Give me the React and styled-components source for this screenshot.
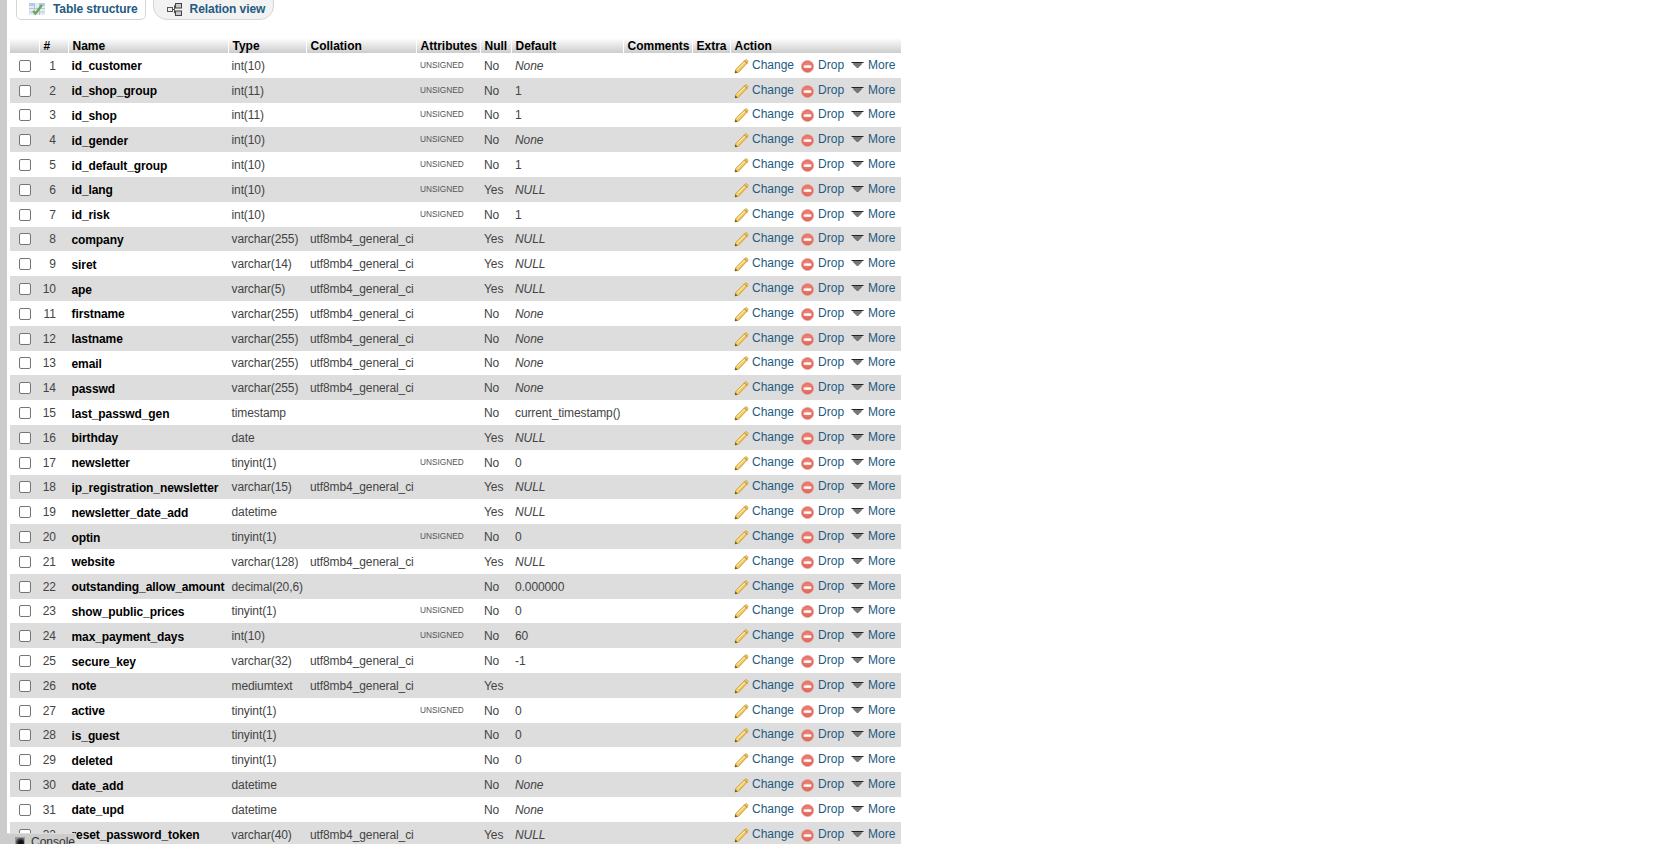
import React from 'react'
import styled, { createGlobalStyle } from 'styled-components'

const GlobalStyle = createGlobalStyle`
  html, body {
    margin: 0;
    padding: 0;
    height: 100%;
    overflow: hidden;
    background: #fff;
  }
  body {
    font-family: "Liberation Sans", Arial, sans-serif;
    font-size: 12px;
    color: #444;
  }
`

const COLLATION = 'utf8mb4_general_ci'

// name, type, collation, unsigned, null, default
const columns = [
  ['id_customer', 'int(10)', '', true, 'No', 'None'],
  ['id_shop_group', 'int(11)', '', true, 'No', '1'],
  ['id_shop', 'int(11)', '', true, 'No', '1'],
  ['id_gender', 'int(10)', '', true, 'No', 'None'],
  ['id_default_group', 'int(10)', '', true, 'No', '1'],
  ['id_lang', 'int(10)', '', true, 'Yes', 'NULL'],
  ['id_risk', 'int(10)', '', true, 'No', '1'],
  ['company', 'varchar(255)', COLLATION, false, 'Yes', 'NULL'],
  ['siret', 'varchar(14)', COLLATION, false, 'Yes', 'NULL'],
  ['ape', 'varchar(5)', COLLATION, false, 'Yes', 'NULL'],
  ['firstname', 'varchar(255)', COLLATION, false, 'No', 'None'],
  ['lastname', 'varchar(255)', COLLATION, false, 'No', 'None'],
  ['email', 'varchar(255)', COLLATION, false, 'No', 'None'],
  ['passwd', 'varchar(255)', COLLATION, false, 'No', 'None'],
  ['last_passwd_gen', 'timestamp', '', false, 'No', 'current_timestamp()'],
  ['birthday', 'date', '', false, 'Yes', 'NULL'],
  ['newsletter', 'tinyint(1)', '', true, 'No', '0'],
  ['ip_registration_newsletter', 'varchar(15)', COLLATION, false, 'Yes', 'NULL'],
  ['newsletter_date_add', 'datetime', '', false, 'Yes', 'NULL'],
  ['optin', 'tinyint(1)', '', true, 'No', '0'],
  ['website', 'varchar(128)', COLLATION, false, 'Yes', 'NULL'],
  ['outstanding_allow_amount', 'decimal(20,6)', '', false, 'No', '0.000000'],
  ['show_public_prices', 'tinyint(1)', '', true, 'No', '0'],
  ['max_payment_days', 'int(10)', '', true, 'No', '60'],
  ['secure_key', 'varchar(32)', COLLATION, false, 'No', '-1'],
  ['note', 'mediumtext', COLLATION, false, 'Yes', ''],
  ['active', 'tinyint(1)', '', true, 'No', '0'],
  ['is_guest', 'tinyint(1)', '', false, 'No', '0'],
  ['deleted', 'tinyint(1)', '', false, 'No', '0'],
  ['date_add', 'datetime', '', false, 'No', 'None'],
  ['date_upd', 'datetime', '', false, 'No', 'None'],
  ['reset_password_token', 'varchar(40)', COLLATION, false, 'Yes', 'NULL'],
]

const headers = [
  ['', 29],
  ['#', 29],
  ['Name', 160],
  ['Type', 78],
  ['Collation', 110],
  ['Attributes', 64],
  ['Null', 31],
  ['Default', 112],
  ['Comments', 69],
  ['Extra', 38],
  ['Action', 171],
]

const Page = styled.div`
  display: flex;
  height: 844px;
  overflow: hidden;
  position: relative;
`

const SideStrip = styled.div`
  flex: 0 0 7px;
  background: #ccc;
`

const Content = styled.div`
  flex: 1;
  padding-left: 3px;
`

const TabBar = styled.ul`
  display: flex;
  align-items: flex-end;
  gap: 7px;
  height: 20px;
  margin: 0 0 18px;
  padding: 0 0 0 6px;
  list-style: none;
  overflow: hidden;
`

const Tab = styled.li`
  display: flex;
  align-items: center;
  gap: 8px;
  height: 29px;
  padding: ${p => (p.$round ? '7px 8px 0 13px' : '7px 7px 0 12px')};
  box-sizing: border-box;
  border: 1px solid #d5d5d5;
  border-radius: ${p => (p.$round ? '0 0 14px 14px' : '0 0 5px 5px')};
  background: ${p => (p.$round ? '#f2f2f2' : '#fff')};
  color: #235a81;
  font-weight: bold;
  font-size: 12px;
  letter-spacing: -0.08px;
`

const Table = styled.table`
  width: 891px;
  table-layout: fixed;
  border-collapse: collapse;
`

const HeadCell = styled.th`
  height: 15px;
  padding: 1px 0 0 ${p => (p.$first ? '0' : '4px')};
  border-left: ${p => (p.$first ? '0' : '1px solid #fff')};
  background: linear-gradient(#fff, #ccc);
  color: #000;
  font-size: 12px;
  font-weight: bold;
  line-height: 14px;
  text-align: left;
  white-space: nowrap;
  overflow: hidden;
  box-sizing: border-box;
  vertical-align: bottom;
`

const Row = styled.tr`
  height: 24.8px;
  background: ${p => (p.$even ? '#ddd' : '#fff')};
`

const Cell = styled.td`
  padding: 1px 0 0 4px;
  font-size: 12px;
  line-height: 14px;
  letter-spacing: -0.1px;
  white-space: nowrap;
  overflow: hidden;
  vertical-align: middle;
  color: #444;
`

const CheckCell = styled.td`
  padding: 1px 0 0 9px;
  vertical-align: middle;
`

const CheckBox = styled.span`
  display: block;
  width: 10px;
  height: 10px;
  border: 1px solid #767676;
  border-radius: 2px;
  background: #fff;
`

const NumberCell = styled(Cell)`
  padding: 1px 12px 0 0;
  text-align: right;
  letter-spacing: 0;
`

const NameCell = styled(Cell)`
  padding: 2px 0 0 3.5px;
  color: #000;
  font-weight: bold;
`

const TypeCell = styled(Cell)`
  padding-left: 3.5px;
`

const Unsigned = styled.span`
  display: block;
  font-size: 8.3px;
  line-height: 10px;
  margin-top: -2px;
  letter-spacing: 0;
  color: #555;
`

const Italic = styled.em`
  font-style: italic;
`

const Actions = styled.div`
  display: flex;
  align-items: center;
  height: 14px;
  margin-top: -2px;
  letter-spacing: 0;
`

const ActionLink = styled.a`
  display: flex;
  align-items: center;
  gap: ${p => p.$gap || 3}px;
  margin-left: ${p => p.$offset || 0}px;
  color: #235a81;
  font-size: 12px;
  text-decoration: none;
`

const ConsoleTab = styled.div`
  position: absolute;
  left: 7px;
  bottom: 0;
  display: flex;
  align-items: flex-start;
  gap: 6px;
  width: 68px;
  height: 11px;
  padding-left: 8px;
  box-sizing: border-box;
  background: #ccc;
  border-top: 1px solid #ddd;
  color: #333;
  font-size: 12px;
  line-height: 14px;
  overflow: hidden;
`

const ConsoleIcon = styled.span`
  flex: 0 0 10px;
  height: 10px;
  margin-top: 3px;
  background: radial-gradient(circle at 60% 60%, #111 30%, #666 70%, #bbb);
  border: 1px solid #999;
  box-sizing: border-box;
`

const ConsoleLabel = styled.span`
  margin-top: 1px;
`

const Pencil = () => (
  <svg width="15" height="15" viewBox="0 0 15 15" style={{ marginTop: 3 }}>
    <path d="M1 14l.8-3.6L10.800 1.400c.8-.8 1.700-.8 2.500 0s.8 1.700 0 2.500L4.600 13.200z" fill="#f3cf6b" stroke="#c9983a" strokeWidth="0.8" />
    <path d="M3.500 10.500L11 3" stroke="#fbecb4" strokeWidth="1" />
    <path d="M5 12L12.500 4.500" stroke="#dfa63f" strokeWidth="0.8" />
    <path d="M1 14l.5-2.500 2 2z" fill="#5b4526" />
    <path d="M10.400 1.800l2.800 2.800" stroke="#b9772d" strokeWidth="1" />
  </svg>
)

const DropIcon = () => (
  <svg width="13" height="13" viewBox="0 0 13 13" style={{ marginTop: 3 }}>
    <defs>
      <radialGradient id="dropFill" cx="50%" cy="40%" r="60%">
        <stop offset="0" stopColor="#f28a7e" />
        <stop offset="1" stopColor="#dd5f55" />
      </radialGradient>
    </defs>
    <circle cx="6.500" cy="6.500" r="6.100" fill="url(#dropFill)" stroke="#e8a79f" strokeWidth="0.8" />
    <rect x="2.700" y="5.400" width="7.600" height="2.400" fill="#fff" />
  </svg>
)

const MoreIcon = () => (
  <svg width="13" height="8" viewBox="0 0 13 8">
    <path d="M1.500 2h10L6.500 6.500z" fill="#777" />
    <path d="M.5 1.500h12" stroke="#222" strokeWidth="1" />
    <path d="M2.500 3L6.500 7 10.500 3" fill="none" stroke="#333" strokeWidth="0.8" />
  </svg>
)

const TableIcon = () => (
  <svg width="16" height="14" viewBox="0 0 16 14">
    <rect x="0" y="1" width="16" height="12" fill="#e3ebf5" />
    <rect x="0" y="1" width="5" height="3" fill="#b9cbe0" />
    <rect x="11" y="1" width="5" height="3" fill="#b9cbe0" />
    <path d="M5.500 1v12M10.500 1v12M0 6.500h16M0 10h16" stroke="#b5c6da" />
    <path d="M4 9l2.500 2.500L13 3" fill="none" stroke="#6aa84f" strokeWidth="2.200" />
  </svg>
)

const RelationIcon = () => (
  <svg width="15" height="13" viewBox="0 0 15 13">
    <rect x="0.500" y="4.500" width="5" height="4" fill="#eee" stroke="#555" />
    <rect x="8.500" y="0.500" width="6" height="4.500" fill="#c8c8c8" stroke="#444" />
    <rect x="8.500" y="8" width="6" height="4.500" fill="#c8c8c8" stroke="#444" />
    <path d="M6 6.500h1.500V2.500H8.500M7.500 6.500V10H8.500" fill="none" stroke="#555" />
  </svg>
)

const DefaultValue = ({ value }) => {
  if (value === 'None' || value === 'NULL') return <Italic>{value}</Italic>
  return value
}

const App = () => {
  return (
    <Page>
      <GlobalStyle />
      <SideStrip />
      <Content>
        <TabBar>
          <Tab>
            <TableIcon />
            Table structure
          </Tab>
          <Tab $round>
            <RelationIcon />
            Relation view
          </Tab>
        </TabBar>
        <Table>
          <colgroup>
            {headers.map(([label, width], i) => (
              <col key={i} width={width} />
            ))}
          </colgroup>
          <thead>
            <tr>
              {headers.map(([label], i) => (
                <HeadCell key={i} $first={i === 0}>{label}</HeadCell>
              ))}
            </tr>
          </thead>
          <tbody>
            {columns.map(([name, type, collation, unsigned, nullable, def], i) => (
              <Row key={name} $even={i % 2 === 1}>
                <CheckCell><CheckBox /></CheckCell>
                <NumberCell>{i + 1}</NumberCell>
                <NameCell>{name}</NameCell>
                <TypeCell>{type}</TypeCell>
                <Cell>{collation}</Cell>
                <Cell>{unsigned && <Unsigned>UNSIGNED</Unsigned>}</Cell>
                <Cell>{nullable}</Cell>
                <Cell><DefaultValue value={def} /></Cell>
                <Cell />
                <Cell />
                <Cell>
                  <Actions>
                    <ActionLink><Pencil />Change</ActionLink>
                    <ActionLink $offset={7} $gap={4}><DropIcon />Drop</ActionLink>
                    <ActionLink $offset={7} $gap={4}><MoreIcon />More</ActionLink>
                  </Actions>
                </Cell>
              </Row>
            ))}
          </tbody>
        </Table>
      </Content>
      <ConsoleTab>
        <ConsoleIcon />
        <ConsoleLabel>Console</ConsoleLabel>
      </ConsoleTab>
    </Page>
  )
}

export default App
